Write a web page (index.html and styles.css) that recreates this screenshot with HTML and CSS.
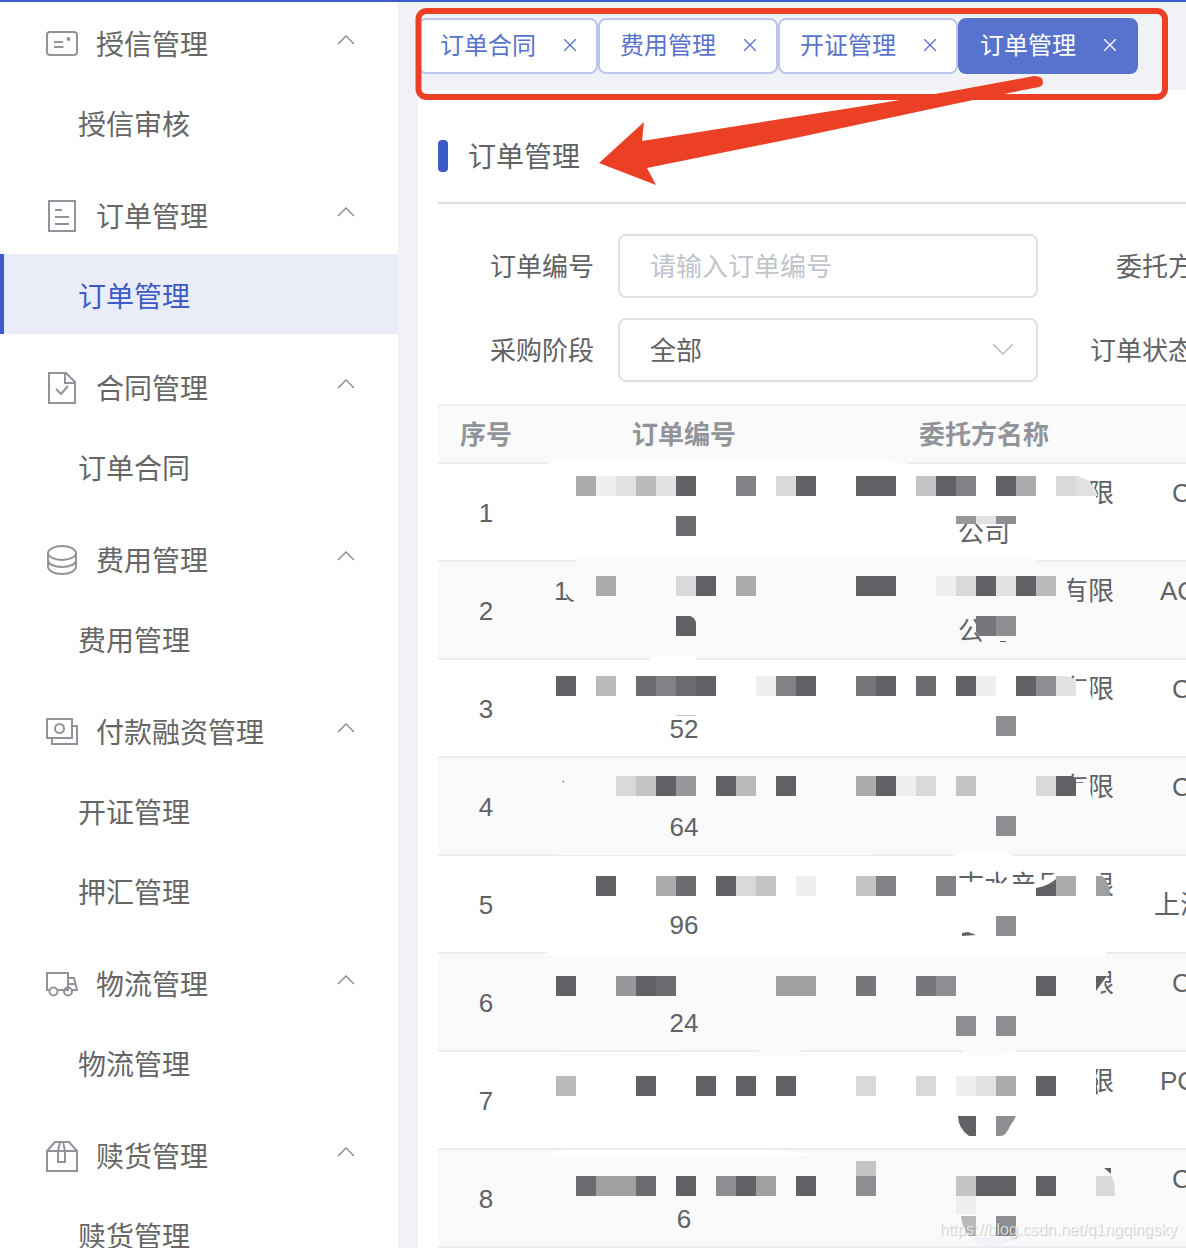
FILE: index.html
```html
<!DOCTYPE html>
<html lang="zh-CN">
<head>
<meta charset="utf-8">
<title>订单管理</title>
<link rel="stylesheet" href="styles.css">
</head>
<body>
<div class="app">
  <nav class="sidebar">
    <section class="group">
      <button class="group-head" type="button">
        <svg class="icon" viewBox="0 0 32 32"><rect x="1" y="4" width="30" height="23" rx="3"/><path d="M8 14h9M8 19h9.500"/><circle class="dot" cx="22.500" cy="11" r="2"/></svg>
        <span class="group-name">授信管理</span>
        <svg class="chevron" viewBox="0 0 20 10"><path d="M2 9l8-8 8 8"/></svg>
      </button>
      <a class="item" href="#">授信审核</a>
    </section>
    <section class="group">
      <button class="group-head" type="button">
        <svg class="icon" viewBox="0 0 32 32"><rect x="3" y="1" width="26" height="30"/><path d="M9 10h7M9 17h14M9 24h14"/></svg>
        <span class="group-name">订单管理</span>
        <svg class="chevron" viewBox="0 0 20 10"><path d="M2 9l8-8 8 8"/></svg>
      </button>
      <a class="item active" href="#">订单管理</a>
    </section>
    <section class="group">
      <button class="group-head" type="button">
        <svg class="icon" viewBox="0 0 32 32"><path d="M3 1h17l9 9v21H3zM19 1v10h10M10 17l5 5 7-8"/></svg>
        <span class="group-name">合同管理</span>
        <svg class="chevron" viewBox="0 0 20 10"><path d="M2 9l8-8 8 8"/></svg>
      </button>
      <a class="item" href="#">订单合同</a>
    </section>
    <section class="group">
      <button class="group-head" type="button">
        <svg class="icon" viewBox="0 0 32 32"><ellipse cx="16" cy="9" rx="14" ry="7"/><path d="M2 9v7c0 4 6 7 14 7s14-3 14-7V9M2 16v6c0 5 6 8 14 8s14-3 14-8v-6"/></svg>
        <span class="group-name">费用管理</span>
        <svg class="chevron" viewBox="0 0 20 10"><path d="M2 9l8-8 8 8"/></svg>
      </button>
      <a class="item" href="#">费用管理</a>
    </section>
    <section class="group">
      <button class="group-head" type="button">
        <svg class="icon" viewBox="0 0 32 32"><path d="M1 3h25v19H1zM26 10h5v18H6v-6"/><circle cx="13.500" cy="12.500" r="4.500"/></svg>
        <span class="group-name">付款融资管理</span>
        <svg class="chevron" viewBox="0 0 20 10"><path d="M2 9l8-8 8 8"/></svg>
      </button>
      <a class="item" href="#">开证管理</a>
      <a class="item" href="#">押汇管理</a>
    </section>
    <section class="group">
      <button class="group-head" type="button">
        <svg class="icon" viewBox="0 0 32 32"><path d="M3 22H1V5h21v17H12M22 10h6l3 12h-5M22 16h7"/><circle cx="7.500" cy="23.500" r="4"/><circle cx="22" cy="23.500" r="4"/></svg>
        <span class="group-name">物流管理</span>
        <svg class="chevron" viewBox="0 0 20 10"><path d="M2 9l8-8 8 8"/></svg>
      </button>
      <a class="item" href="#">物流管理</a>
    </section>
    <section class="group">
      <button class="group-head" type="button">
        <svg class="icon" viewBox="0 0 32 32"><path d="M1 11v20h30V11zM1 11l8-9h14l8 9M14 2l-2 9v11h7V11l-2-9"/></svg>
        <span class="group-name">赎货管理</span>
        <svg class="chevron" viewBox="0 0 20 10"><path d="M2 9l8-8 8 8"/></svg>
      </button>
      <a class="item" href="#">赎货管理</a>
    </section>
  </nav>

  <main class="main">
    <div class="tabs">
      <button class="tab" type="button">订单合同<svg class="close" viewBox="0 0 12 12"><path d="M0 0l12 12M12 0L0 12"/></svg></button>
      <button class="tab" type="button">费用管理<svg class="close" viewBox="0 0 12 12"><path d="M0 0l12 12M12 0L0 12"/></svg></button>
      <button class="tab" type="button">开证管理<svg class="close" viewBox="0 0 12 12"><path d="M0 0l12 12M12 0L0 12"/></svg></button>
      <button class="tab current" type="button">订单管理<svg class="close" viewBox="0 0 12 12"><path d="M0 0l12 12M12 0L0 12"/></svg></button>
    </div>
    <div class="panel">
      <h1 class="title">订单管理</h1>
      <form class="filters">
        <label class="label" for="order-no">订单编号</label>
        <input class="field" id="order-no" type="text" placeholder="请输入订单编号">
        <label class="label" for="client">委托方</label>
        <input class="field" id="client" type="text">
        <label class="label" for="stage">采购阶段</label>
        <div class="select">
          <select class="field" id="stage"><option>全部</option></select>
          <svg class="arrow" viewBox="0 0 20 12"><path d="M0 1l10 10L20 1"/></svg>
        </div>
        <label class="label" for="status">订单状态</label>
        <input class="field" id="status" type="text">
      </form>
      <div class="table-wrap">
        <table class="table">
          <colgroup><col class="col-index"><col class="col-wide"><col class="col-wide"><col class="col-wide"></colgroup>
          <thead>
            <tr><th>序号</th><th>订单编号</th><th>委托方名称</th><th></th></tr>
          </thead>
          <tbody>
            <tr><td>1</td><td></td><td><span class="line end">限</span><span class="line">公司</span></td><td class="code"><span class="line short">C</span></td></tr>
            <tr><td>2</td><td><span class="line start">1</span><span class="line"></span></td><td><span class="line end">有限</span><span class="line">公司</span></td><td class="code"><span class="line long">AC</span></td></tr>
            <tr><td>3</td><td><span class="line"></span><span class="line">52</span></td><td><span class="line end">有限</span><span class="line"></span></td><td class="code"><span class="line short">C</span></td></tr>
            <tr><td>4</td><td><span class="line"></span><span class="line">64</span></td><td><span class="line end">有限</span><span class="line"></span></td><td class="code"><span class="line short">C</span></td></tr>
            <tr><td>5</td><td><span class="line"></span><span class="line">96</span></td><td><span class="line end">古水产品有限</span><span class="line"></span></td><td class="place">上海</td></tr>
            <tr><td>6</td><td><span class="line"></span><span class="line">24</span></td><td><span class="line end">限</span><span class="line"></span></td><td class="code"><span class="line short">C</span></td></tr>
            <tr><td>7</td><td></td><td><span class="line end">限</span><span class="line"></span></td><td class="code"><span class="line long">PC</span></td></tr>
            <tr><td>8</td><td><span class="line"></span><span class="line">6</span></td><td></td><td class="code"><span class="line short">C</span></td></tr>
          </tbody>
        </table>
        <!-- mosaic that hides order numbers and client names -->
        <svg class="mosaic" viewBox="438 404 748 844">
          <!-- smears over the row lines -->
          <path fill="#fff" d="M548 464q4-5 16-5h286q26 0 62 5zM650 660v-3q2-1 6-1h36q4 0 4 1v3zM545 1156q8-5 26-6h180q50 1 65 6zM546 954q4-4 12-4h545l4 5H546zM954 856q4-4 10-4h45l4 4z"/>
          <path fill="#fafafa" d="M575 562q6-6 16-6h426q12 2 24 6zM745 1056q18-8 34-8t36 8zM958 1048q10 8 22 8 24 0 44-8zM548 956h555v4H548zM550 1056q10-2 20-2h110l8 2z"/>
          <path fill="#fafafa" d="M555 854h317v1H555z"/>
          <!-- erased parts of the names -->
          <path fill="#fff" d="M1074 476q17 2 22 20l2 12h-24zM950 516h70v8h-70zM1060 683h17l14-2v4l-1 8 4 10h-34zM956 883l28-2v22h-28zM984 882l28 2h24l24-14h38q6 6 12 32H984zM1084 1068h12v32h-12z"/>
          <path fill="#fafafa" d="M1060 574h5l7 28h-12zM980 616h40v29h-36l-4-8zM1060 783h31l-1 8 4 12h-34zM1084 966h24v8l-10 26h-14z"/>
          <path fill="#606266" d="M567 594q3 6 7 6l-1 2q-5-1-7-7zM962 933l6-1 8 3-14 1zM1000 641h6v1h-6zM1104 1168h7v6zM562 783l2-3v2zM1096 1082l2 11-2 2z"/>
          <path fill="#606266" d="M676 476h20v20h-20zM796 476h20v20h-20zM856 476h40v20h-40zM936 476h20v20h-20zM996 476h20v20h-20zM696 576h20v20h-20zM856 576h40v20h-40zM976 576h20v20h-20zM1016 576h20v20h-20zM676 616h14q4 1 6 6v14h-20zM556 676h20v20h-20zM696 676h20v20h-20zM796 676h20v20h-20zM876 676h20v20h-20zM956 676h20v20h-20zM1016 676h20v20h-20zM656 776h20v20h-20zM716 776h20v20h-20zM776 776h20v20h-20zM876 776h20v20h-20zM1056 776h16l4 3v17h-20zM596 876h20v20h-20zM716 876h20v20h-20zM1036 888q12-2 20-9v17h-20zM556 976h20v20h-20zM636 976h20v20h-20zM1036 976h20v20h-20zM1096 976h11l-11 15zM636 1076h20v20h-20zM696 1076h20v20h-20zM736 1076h20v20h-20zM776 1076h20v20h-20zM1036 1076h20v20h-20zM958 1116h18v20h-7q-11-8-11-20zM676 1176h20v20h-20zM736 1176h20v20h-20zM796 1176h20v20h-20zM976 1176h40v20h-40zM1036 1176h20v20h-20z"/>
          <path fill="#6b6c70" d="M676 516h20v20h-20zM636 676h20v20h-20zM676 676h20v20h-20zM916 676h20v20h-20zM676 876h20v20h-20zM656 976h20v20h-20zM576 1176h20v20h-20zM636 1176h20v20h-20z"/>
          <path fill="#76777b" d="M976 616h20v20h-17l-3-4zM856 676h20v20h-20zM856 976h20v20h-20zM916 976h20v20h-20z"/>
          <path fill="#818286" d="M736 476h20v20h-20zM956 476h20v20h-20zM656 676h20v20h-20zM776 676h20v20h-20zM876 876h20v20h-20zM936 876h20v20h-20z"/>
          <path fill="#8e8f93" d="M996 516h20v8h-20zM996 616h20v20h-20zM1036 676h20v20h-20zM996 716h20v20h-20zM996 816h20v20h-20zM996 916h20v20h-20zM936 976h20v20h-20zM956 1016h20v20h-20zM996 1016h20v20h-20zM996 1116h20q-2 5-6 10-4 10-10 10h-4zM716 1176h20v20h-20zM856 1176h20v20h-20zM996 1216h20v20h-20z"/>
          <path fill="#96979b" d="M956 516h20v8h-20zM676 776h20v20h-20zM616 976h20v20h-20z"/>
          <path fill="#9fa0a2" d="M1096 876h6q6 4 8 16v4h-14zM776 976h40v20h-40zM596 1176h40v20h-40zM756 1176h20v20h-20z"/>
          <path fill="#aaabad" d="M576 476h20v20h-20zM1016 476h20v20h-20zM596 576h20v20h-20zM736 576h20v20h-20zM856 776h20v20h-20zM656 876h20v20h-20zM1056 876h20v20h-20zM996 1076h20v20h-20z"/>
          <path fill="#b9babc" d="M636 476h20v20h-20zM1036 576h20v20h-20zM596 676h20v20h-20zM736 776h20v20h-20zM556 1076h20v20h-20zM961 1216h15v20h-7q-7-8-8-20z"/>
          <path fill="#c3c4c6" d="M916 476h20v20h-20zM636 776h20v20h-20zM956 776h20v20h-20zM756 876h20v20h-20zM856 876h20v20h-20zM856 1161h20v15h-20zM956 1176h20v20h-20zM676 715h20v1h-20z"/>
          <path fill="#d8d9da" d="M776 476h20v20h-20zM1056 476h20v20h-20zM676 576h20v20h-20zM956 576h20v20h-20zM616 776h20v20h-20zM916 776h20v20h-20zM1036 776h20v20h-20zM736 876h20v20h-20zM856 1076h20v20h-20zM916 1076h20v20h-20zM1096 1176h15q4 4 4 20h-19z"/>
          <path fill="#e2e2e3" d="M656 476h20v20h-20zM1076 476q16 2 22 20h-22zM976 516h20v8h-20zM996 576h20v20h-20zM1056 676h10l10 3v17h-20zM976 1076h20v20h-20zM616 476h20v20h-20z"/>
          <path fill="#efefef" d="M596 476h20v20h-20zM936 576h20v20h-20zM756 676h20v20h-20zM976 676h20v20h-20zM896 776h20v20h-20zM796 876h20v20h-20zM956 1076h20v20h-20zM956 1196h20v18h-20z"/>
          <path fill="#f1f3f9" d="M970 1237h54q-16 5-24 8-20 4-30-8z"/>
        </svg>
      </div>
    </div>
  </main>
</div>
<!-- hand-drawn callout: frame round the tabs and arrow to the title -->
<svg class="callout" viewBox="0 0 1186 200">
  <rect x="418.500" y="11" width="746.500" height="86" rx="8"/>
  <path d="M599 163L644 122 642 141 800 116Q925 97 1034 76 1043 76 1043 82 1043 86 1039 87L973 100 800 137 647 168 656 185z"/>
</svg>
<div class="watermark">https://blog.csdn.net/q1ngqingsky</div>
</body>
</html>
```

FILE: styles.css
```css
* { box-sizing: border-box; }

body {
  margin: 0;
  height: 100vh;
  overflow: hidden;
  position: relative;
  background: #f1f2f6;
  color: #606266;
  font: 26px/40px "Liberation Sans", "Noto Sans CJK SC", sans-serif;
}

button, input, select { font: inherit; color: inherit; }
svg { fill: none; flex: none; }

.app {
  display: flex;
  height: 100%;
  border-top: 2px solid #3c5bc8;
}

/* sidebar */
.sidebar {
  flex: none;
  width: 398px;
  overflow: hidden;
  background: #fff;
  color: #666;
  font-size: 28px;
}
.group + .group { margin-top: 12px; }
.group-head {
  display: flex;
  align-items: center;
  width: 100%;
  height: 80px;
  padding: 4px 42px 0 46px;
  border: 0;
  background: none;
  text-align: left;
}
.group-name { flex: 1; margin-left: 18px; padding-top: 3px; }
.icon { width: 32px; height: 32px; stroke: #909399; stroke-width: 2; }
.icon .dot { fill: #909399; stroke: none; }
.chevron { width: 20px; height: 10px; margin-bottom: 8px; stroke: #85878c; stroke-width: 1.3; }
.item {
  display: block;
  height: 80px;
  padding: 24px 0 0 78px;
  color: inherit;
  text-decoration: none;
}
.item.active {
  padding-left: 74px;
  border-left: 4px solid #3c5bc8;
  background: #eaedf8;
  color: #3c5bc8;
}

/* tabs */
.main {
  flex: 1;
  display: flex;
  flex-direction: column;
  min-width: 0;
  padding-left: 20px;
}
.tabs { display: flex; padding: 16px 0; }
.tab {
  display: flex;
  align-items: center;
  justify-content: space-between;
  width: 180px;
  height: 56px;
  padding: 0 20px;
  border: 2px solid #bcc6ec;
  border-radius: 8px;
  background: #fff;
  color: #5873cd;
  font-size: 24px;
}
.tab.current { border-color: #5873cd; background: #5873cd; color: #fff; }
.close { width: 12px; height: 12px; margin-bottom: 2px; stroke: currentColor; stroke-width: 1.3; }

/* panel */
.panel {
  flex: 1;
  min-height: 0;
  overflow: hidden;
  padding-left: 20px;
  background: #fff;
}
.title {
  display: flex;
  align-items: center;
  gap: 20px;
  height: 114px;
  margin: 0 0 30px;
  padding: 40px 0 16px;
  border-bottom: 2px solid #dcdfe6;
  font-size: 28px;
  line-height: 56px;
  font-weight: 400;
}
.title::before {
  content: "";
  width: 10px;
  height: 32px;
  margin-bottom: 4px;
  border-radius: 4px;
  background: #3c5bc8;
}
.filters {
  display: grid;
  grid-template-columns: 180px 420px 180px 420px;
  row-gap: 20px;
  margin-bottom: 22px;
}
.label { padding: 13px 24px 0 0; text-align: right; }
.field {
  width: 100%;
  height: 64px;
  padding: 2px 30px 0;
  border: 2px solid #dcdfe6;
  border-radius: 8px;
  background: #fff;
  appearance: none;
}
.field::placeholder { color: #c0c4cc; opacity: 1; }
.select { position: relative; }
.arrow {
  position: absolute;
  right: 25px;
  top: 25px;
  width: 20px;
  height: 12px;
  stroke: #b4b8c0;
  stroke-width: 1.3;
  pointer-events: none;
}

/* table */
.table-wrap { position: relative; }
.table {
  width: 996px;
  table-layout: fixed;
  border-collapse: separate;
  border-spacing: 0;
  border-top: 2px solid #ebeef5;
  text-align: center;
}
.col-index { width: 96px; }
.col-wide { width: 300px; }
.table th {
  height: 58px;
  padding: 2px 0 0;
  border-bottom: 2px solid #ebecf3;
  background: #fafafa;
  color: #909399;
}
.table td {
  height: 98px;
  padding: 9px 20px 7px;
  border-bottom: 2px solid #ebecf3;
}
.table tr:nth-child(even) td { background: #fafafa; }
.line { display: block; height: 40px; }
.line.start { text-align: left; }
.line.end { text-align: right; }
.table .code { vertical-align: top; text-align: left; }
.table .place { text-align: left; }
.line.short { padding-left: 18px; }
.line.long { padding-left: 6px; }
.mosaic {
  position: absolute;
  left: 0;
  top: 0;
  width: 748px;
  height: 844px;
}

/* overlays */
.callout {
  position: absolute;
  left: 0;
  top: 0;
  width: 1186px;
  height: 200px;
  pointer-events: none;
}
.callout rect { stroke: #eb4026; stroke-width: 6; }
.callout path { fill: #eb4026; }
.watermark {
  position: absolute;
  right: 9px;
  bottom: 8px;
  color: rgba(255, 255, 255, .7);
  font-size: 16px;
  line-height: 20px;
  text-shadow: 1px 1px 1px rgba(0, 0, 0, .2);
}
```
